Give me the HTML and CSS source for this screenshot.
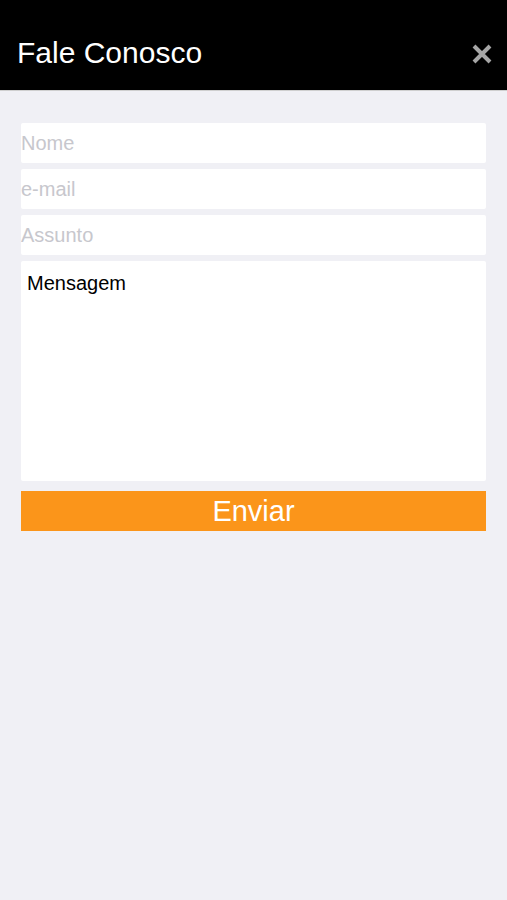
FILE: index.html
```html
<!DOCTYPE html>
<html lang="pt">
<head>
    <meta charset="UTF-8">
    <meta name="viewport" content="width=device-width, initial-scale=1.0">
    <title>Fale Conosco</title>
    <link rel="stylesheet" href="styles.css">
</head>
<body>
    <header class="top-bar">
        <h1 class="title">Fale Conosco</h1>
        <button class="close-button" aria-label="Fechar">
            <svg width="22" height="22" viewBox="0 0 22 22">
                <path d="M3 3 L19 19 M19 3 L3 19" stroke="#a6a6a6" stroke-width="4" stroke-linecap="butt"/>
            </svg>
        </button>
    </header>

    <form class="contact-form">
        <input class="field" type="text" placeholder="Nome">
        <input class="field" type="email" placeholder="e-mail">
        <input class="field" type="text" placeholder="Assunto">
        <textarea class="message">Mensagem</textarea>
        <button class="send-button" type="button">Enviar</button>
    </form>
</body>
</html>
```
FILE: styles.css
```css
body {
    margin: 0;
    font-family: "Liberation Sans", Arial, sans-serif;
    background-color: #f0f0f5;
    min-height: 900px;
}
.top-bar {
    height: 91px;
    background-color: #000;
    border-bottom: 1px solid #cfcfcf;
    display: flex;
    align-items: center;
    justify-content: space-between;
    padding: 0 14px 0 17px;
    box-sizing: border-box;
}
.title {
    margin: 16px 0 0 0;
    font-size: 30px;
    font-weight: normal;
    color: #fff;
}
.close-button {
    background: none;
    border: none;
    padding: 0;
    margin-top: 18px;
    display: flex;
}
.contact-form {
    display: flex;
    flex-direction: column;
    gap: 6px;
    padding: 32px 21px 0 21px;
}
.field {
    height: 40px;
    border: none;
    border-radius: 2px;
    background-color: #fff;
    padding: 0;
    font-family: inherit;
    font-size: 20px;
    outline: none;
}
.field::placeholder {
    color: #c7c7cd;
}
.message {
    height: 220px;
    border: none;
    border-radius: 2px;
    background-color: #fff;
    padding: 11px 6px;
    box-sizing: border-box;
    font-family: inherit;
    font-size: 20px;
    color: #000;
    resize: none;
    outline: none;
}
.send-button {
    margin-top: 4px;
    height: 40px;
    border: none;
    background-color: #fb951a;
    color: #fff;
    font-family: inherit;
    font-size: 29px;
    padding: 0;
}
```
